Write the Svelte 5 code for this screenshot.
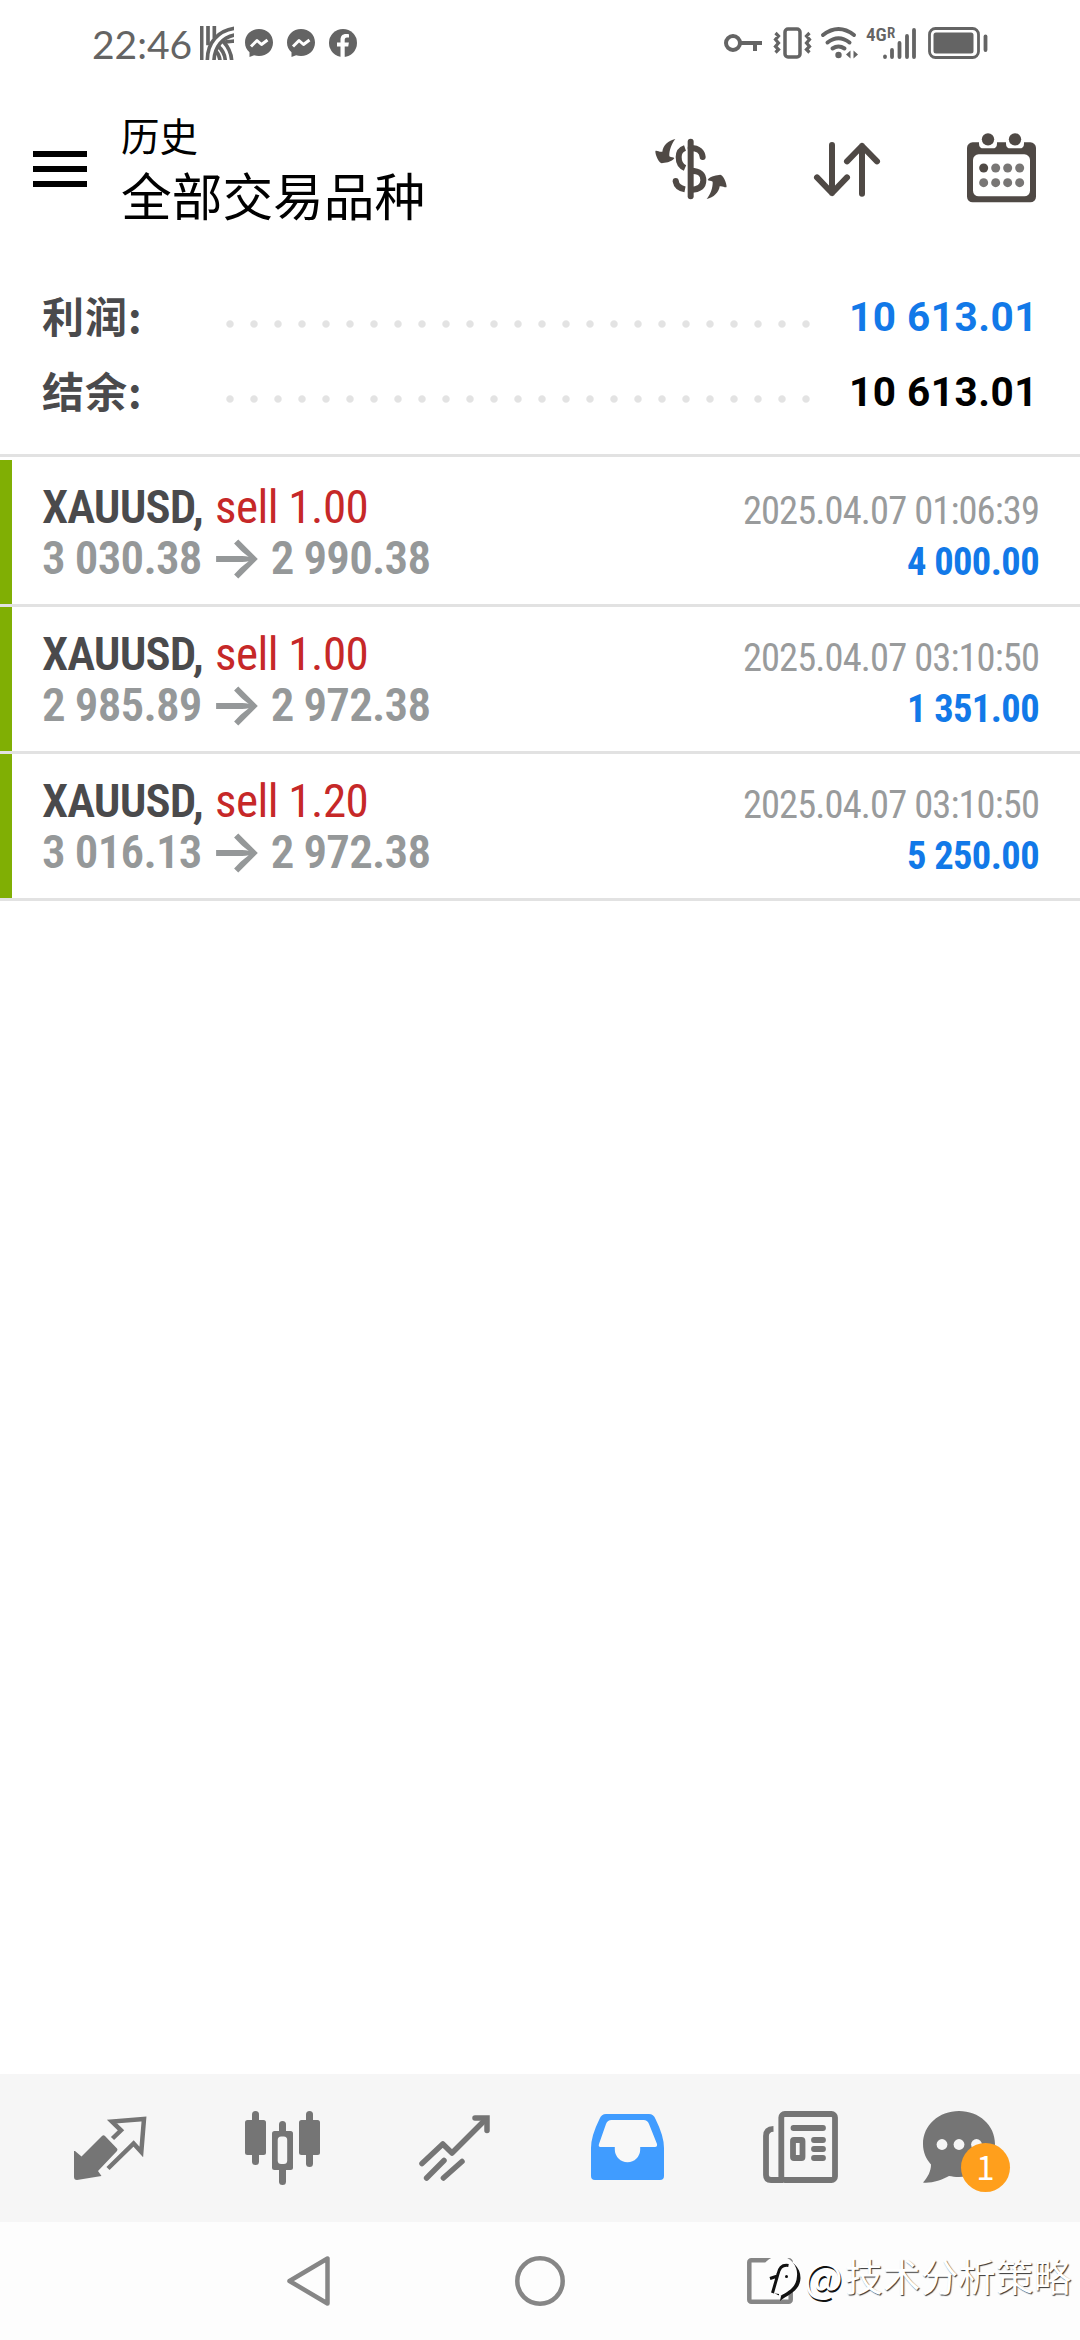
<script>
  const summary = [
    { label: '利润:', value: '10 613.01', tone: 'blue' },
    { label: '结余:', value: '10 613.01', tone: 'black' }
  ];

  const deals = [
    { symbol: 'XAUUSD,', side: 'sell 1.00', from: '3 030.38', to: '2 990.38', time: '2025.04.07 01:06:39', profit: '4 000.00' },
    { symbol: 'XAUUSD,', side: 'sell 1.00', from: '2 985.89', to: '2 972.38', time: '2025.04.07 03:10:50', profit: '1 351.00' },
    { symbol: 'XAUUSD,', side: 'sell 1.20', from: '3 016.13', to: '2 972.38', time: '2025.04.07 03:10:50', profit: '5 250.00' }
  ];

  const calendarDots = [50, 86, 122, 158];
  let unread = $state(1);
</script>

{#snippet messenger()}
  <svg class="app-icon" viewBox="0 0 28 28">
    <path d="M14 0C6 0 0 6 0 13.4c0 4 1.700 7.400 4.500 9.900V28l4.600-1.700c1.500.5 3.200.7 4.900.7 8 0 14-6 14-13.600S22 0 14 0z" fill="#646464" />
    <path d="M6 17.500l6-6 4.500 4 6-4.500" fill="none" stroke="#fff" stroke-width="3" stroke-linejoin="round" />
  </svg>
{/snippet}

<div class="screen">
  <div class="status">
    <span class="clock">22:46</span>
    <svg class="weave" viewBox="0 0 102 102" fill="none" stroke="#646464" stroke-width="11">
      <path d="M5 0V102M24 0V58M43 0V36" />
      <path d="M22 102C22 50 54 14 104 7M42 102C44 64 66 34 104 27" />
      <path d="M54 60C68 72 75 86 76 104M69 46C84 62 94 82 95 104M48 76C56 84 59 92 60 104M76 46C86 48 94 46 104 45" />
    </svg>
    {@render messenger()}
    {@render messenger()}
    <svg class="app-icon" viewBox="0 0 28 28">
      <circle cx="14" cy="14" r="14" fill="#646464" />
      <path d="M11.500 28V17.500H8v-4h3.500V11c0-4 2-6 5.500-6 1.400 0 2.500.2 3 .3v3.300h-2c-1.700 0-2.300 1-2.300 2.300v2.600h4.200l-.7 4h-3.500V28z" fill="#fff" />
    </svg>

    <div class="status-right">
      <svg width="38" height="18" viewBox="0 0 38 18" fill="none" stroke="#646464" stroke-width="4">
        <circle cx="9" cy="9" r="7" />
        <path d="M16 9H38M31 9V17" />
      </svg>
      <svg class="vibrate" width="37" height="32" viewBox="0 0 37 32" fill="none" stroke="#646464" stroke-width="3.500">
        <rect x="11" y="2" width="15" height="28" rx="3" />
        <path d="M1.500 6l3 3-3 3.500 3 3.500-3 3.500 3 3-3 3M35.500 6l-3 3 3 3.500-3 3.500 3 3.500-3 3 3 3" stroke-width="3.200" />
      </svg>
      <svg class="wifi" width="37" height="32" viewBox="0 0 37 32" fill="none" stroke="#646464" stroke-width="4" stroke-linecap="round">
        <path d="M2 8Q17.500-4 33 8M6.500 15.500Q17.500 7 28.500 15.500M11.500 21.500Q17.500 17.500 23.500 21.500" />
        <circle cx="17.500" cy="28" r="3.200" fill="#646464" stroke="none" />
        <path d="M29.500 23.500v8L25 27.500zM32.500 23.500v8l4.500-4z" fill="#646464" stroke="none" />
      </svg>
      <span class="net">4G</span>
      <span class="roam">R</span>
      <svg class="bars" width="33" height="31" viewBox="0 0 33 31" stroke="#646464" stroke-width="3.800" stroke-linecap="round">
        <path d="M2 28.500v.5M9 22v7M16.500 15v14M24 8v21M31 2v27" />
      </svg>
      <svg width="60" height="32" viewBox="0 0 60 32">
        <rect x="1.500" y="1.500" width="49" height="29" rx="6" fill="none" stroke="#646464" stroke-width="2.800" />
        <rect x="5.500" y="5.500" width="40" height="21" rx="2.500" fill="#646464" />
        <path d="M57.500 9.500V23" stroke="#646464" stroke-width="3.800" stroke-linecap="round" />
      </svg>
    </div>
  </div>

  <header>
    <button class="menu" aria-label="菜单"><i></i><i></i><i></i></button>
    <div class="titles">
      <div class="title">历史</div>
      <div class="subtitle">全部交易品种</div>
    </div>
    <div class="actions">
      <svg width="72" height="60" viewBox="0 0 216 180" fill="none" stroke="#4f4945" stroke-width="18">
        <path d="M61 0C40 4 24 20 22 38C14 40 8 34 2 35C-2 36 8 70 20 73C30 70 48 72 58 58C56 54 48 56 43 52C42 34 50 14 61 0z" fill="#4f4945" stroke="none" />
        <path d="M155 180C176 176 192 160 194 142C202 140 208 146 214 145C218 144 208 110 196 107C186 110 168 108 158 122C160 126 168 124 173 128C174 146 166 166 155 180z" fill="#4f4945" stroke="none" />
        <path d="M90 27C75 32 71 42 71 54C71 70 78 82 90 87M90 151C74 148 64 140 62 126" />
        <circle cx="62" cy="126" r="9" fill="#4f4945" stroke="none" />
        <path d="M107 27C132 27 142 40 143 54" stroke-linecap="round" />
        <path d="M107 95C134 96 145 104 145 124C145 142 132 152 107 153" />
        <path d="M107 8V172" stroke-linecap="round" />
      </svg>
      <svg width="66" height="55" viewBox="0 0 198 165" fill="none" stroke="#4f4945" stroke-width="18" stroke-linecap="round" stroke-linejoin="round">
        <path d="M54 9V153M9 106L54 153L99 106M144 155V12M99 58L144 12L189 58" />
      </svg>
      <svg class="calendar" width="69" height="70" viewBox="0 0 207 210">
        <rect y="28" width="207" height="180" rx="17" fill="#4f4945" />
        <rect x="18" y="64" width="171" height="126" rx="17" fill="#fff" />
        <path d="M36 26H90V32Q90 46 76 46H50Q36 46 36 32zM117 26H171V32Q171 46 157 46H131Q117 46 117 32z" fill="#fff" />
        <circle cx="63" cy="19" r="18.500" fill="#4f4945" />
        <circle cx="144" cy="19" r="18.500" fill="#4f4945" />
        {#each calendarDots as x, i}
          <circle cx={x} cy="105" r="13.500" fill={i === 0 ? '#4f4945' : '#787675'} />
          <circle cx={x} cy="149" r="13.500" fill="#787675" />
        {/each}
      </svg>
    </div>
  </header>

  <section class="summary">
    {#each summary as row}
      <div class="sum-row">
        <span class="sum-label">{row.label}</span>
        <span class="leader"></span>
        <span class="sum-value {row.tone}">{row.value}</span>
      </div>
    {/each}
  </section>

  <main>
    {#each deals as deal}
      <div class="deal">
        <div class="left">
          <div class="line"><b>{deal.symbol}</b><span class="sell">{deal.side}</span></div>
          <div class="line prices"><span>{deal.from}</span><span class="arrow">→</span><span>{deal.to}</span></div>
        </div>
        <div class="right">
          <div class="time">{deal.time}</div>
          <div class="profit">{deal.profit}</div>
        </div>
      </div>
    {/each}
  </main>

  <nav class="tabs">
    <svg width="72" height="64" viewBox="0 0 72 64">
      <path d="M1 35L7.500 40.500L28 20Q29.500 18.500 31 20L43 32.500Q44 33.500 43 35L24 55L27.500 60L3 64Q0 64 0 61V35z" fill="#757575" />
      <path d="M38.500 22.500L47 14.300L38 5.500L70 3L67.300 36L59.600 27.500L34 52.500" fill="none" stroke="#757575" stroke-width="4.500" />
    </svg>
    <svg width="75" height="74" viewBox="0 0 75 74" fill="#757575">
      <rect x="7" width="7" height="54" rx="3.500" />
      <rect y="9" width="21" height="35" rx="2.500" />
      <rect x="61" width="7" height="56" rx="3.500" />
      <rect x="54" y="9" width="21" height="35" rx="2.500" />
      <rect x="34" y="10" width="7" height="64" rx="3.500" />
      <rect x="27" y="20" width="21" height="39" rx="2.500" />
      <rect x="32.700" y="25.500" width="9.500" height="27.500" rx="3.500" fill="#f6f6f6" />
    </svg>
    <svg width="71" height="66" viewBox="0 0 71 66" fill="none" stroke="#757575" stroke-width="5.500" stroke-linecap="round">
      <path d="M3 48.500L23.800 29L33 38L67 4M7.600 63L25 45.500M24.400 63L43 46.500" stroke-linejoin="round" />
      <path d="M56 3H68V15.500" />
    </svg>
    <svg class="inbox" width="73" height="66" viewBox="0 0 73 66">
      <path d="M15 0H58Q62.500 0 64.500 5Q73 22 73 34V62Q73 66 69 66H4Q0 66 0 62V34Q0 22 8.500 5Q10.500 0 15 0z" fill="#409cff" />
      <path d="M20.500 6H52.500Q56.500 6 58 10L66 30Q66.500 33 64 33H49.200V35.500A12.700 12.700 0 0 1 23.800 35.500V33H9.500Q7 33 8 30L15 10Q16.500 6 20.500 6z" fill="#f8f8f8" />
    </svg>
    <svg width="75" height="72" viewBox="0 0 75 72" fill="none" stroke="#757575" stroke-width="5.800">
      <rect x="18.300" y="3" width="53.700" height="66" rx="3.500" />
      <path d="M10.500 17.800Q3 18 3 25V64Q3 69 8 69H20" />
      <path d="M30.500 17H60M51 29H60M51 38H60M51 47H60" stroke-linecap="round" />
      <rect x="30" y="29" width="9.500" height="18" rx="1" />
    </svg>
    <div class="chat">
      <svg width="72" height="72" viewBox="0 0 72 72">
        <path d="M36 0C56 0 72 14 72 33S56 66 36 66C32 66 29 65.500 26 65C19 69 8 72.500 0 71.500C5 66 8 60 8 53.500C3 48 0 41 0 33C0 14 16 0 36 0z" fill="#757575" />
        <circle cx="19" cy="33.500" r="5.400" fill="#f6f6f6" />
        <circle cx="36" cy="33.500" r="5.400" fill="#f6f6f6" />
        <circle cx="53.500" cy="33.500" r="5.400" fill="#f6f6f6" />
      </svg>
      <span class="badge">{unread}</span>
    </div>
  </nav>

  <div class="system">
    <svg width="43" height="50" viewBox="0 0 43 50" fill="none" stroke="#868686" stroke-width="4.500" stroke-linejoin="round">
      <path d="M2.500 25L40.500 2.500V47.500z" />
    </svg>
    <svg width="50" height="50" viewBox="0 0 50 50" fill="none" stroke="#868686" stroke-width="4.500">
      <circle cx="25" cy="25" r="22.700" />
    </svg>
    <svg width="46" height="46" viewBox="0 0 46 46" fill="none" stroke="#868686" stroke-width="4.500">
      <rect x="2.300" y="2.300" width="41.400" height="41.400" rx="2" />
    </svg>
    <div class="watermark">
      <svg width="40" height="46" viewBox="0 0 40 46">
        <path d="M20 3A19 19 0 0 1 39.500 22C39 35 28 38 19 45L20 40A19 19 0 0 1 20 3z" fill="#111" />
        <path d="M18 0A18 18 0 0 1 36 20C35.500 33 25 36 18 41L18 38A18 19 0 0 1 18 0z" fill="#fdfdfd" />
        <path d="M27.500 9.500Q19 8 17 18L11.500 37M9 22.500L16.500 20" fill="none" stroke="#111" stroke-width="3" />
        <circle cx="25.500" cy="20.500" r="1.500" fill="#111" />
      </svg>
      <span class="at">@</span><span>技术分析策略</span>
    </div>
  </div>
</div>

<style>
  :global(body) {
    background: #fff;
  }

  .screen {
    width: 1080px;
    height: 2340px;
    display: flex;
    flex-direction: column;
    background: #fff;
    font-family: Roboto, 'Noto Sans CJK SC', sans-serif;
    overflow: hidden;
  }
  svg { display: block; flex-shrink: 0; overflow: visible; }

  .status {
    height: 86px;
    display: flex;
    align-items: center;
    padding: 0 92px 0 92px;
    color: #646464;
  }
  .clock { font: 39px/46px Lato, sans-serif; width: 108px; margin-top: 2px; }
  .weave { width: 34px; height: 34px; margin-right: 11px; overflow: hidden; }
  .app-icon { width: 28px; height: 28px; margin-right: 14px; }
  .status-right {
    margin-left: auto;
    display: flex;
    align-items: center;
  }
  .vibrate { margin-left: 12px; }
  .wifi { margin-left: 10px; }
  .net, .roam { font: 600 19px/20px 'Roboto Condensed', sans-serif; margin-top: -16px; }
  .net { margin-left: 8px; width: 21px; }
  .roam { font-size: 15px; width: 8px; margin-top: -20px; }
  .bars { margin-left: -12px; margin-right: 12px; }

  header {
    height: 168px;
    display: flex;
    align-items: flex-start;
    padding: 0 44px 0 33px;
  }
  .menu {
    display: flex;
    flex-direction: column;
    gap: 9px;
    width: 54px;
    margin-top: 65px;
    padding: 0;
    border: 0;
    background: none;
  }
  .menu i { height: 6px; background: #000; }
  .titles { margin: 18px 0 0 34px; color: #000; font-family: 'Noto Sans CJK SC', sans-serif; }
  .title { font-size: 38.500px; line-height: 60px; }
  .subtitle { font-size: 50.700px; line-height: 60px; }
  .actions {
    margin-left: auto;
    margin-top: 53px;
    display: flex;
    gap: 87px;
  }
  .actions svg:nth-child(2) { margin-top: 3px; }
  .calendar { margin-top: -6px; }

  .summary {
    height: 203px;
    box-sizing: border-box;
    padding: 25px 42px 0 42px;
    border-bottom: 3px solid #e2e2e2;
  }
  .sum-row { display: flex; align-items: center; height: 75px; }
  .sum-label {
    width: 176px;
    margin-top: -4px;
    color: #4a4a4c;
    font: 700 42px/60px 'Noto Sans CJK SC', sans-serif;
    letter-spacing: 1px;
  }
  .leader {
    width: 600px;
    height: 24px;
    margin-top: 14px;
    background: radial-gradient(circle at 12px 12px, #e3e3e3 3.200px, transparent 4.200px) 0 0 / 24px 24px repeat-x;
  }
  .sum-value {
    margin-left: auto;
    margin-top: 1px;
    font-size: 40.500px;
    line-height: 60px;
    font-weight: 700;
    letter-spacing: 0.5px;
  }
  .blue { color: #1279e8; }
  .black { color: #000; }

  main { flex: 1; padding-top: 3px; }
  .deal {
    height: 147px;
    box-sizing: border-box;
    display: flex;
    justify-content: space-between;
    padding: 21px 41px 0 42px;
    border-bottom: 3px solid #e2e2e2;
    background: linear-gradient(#80af04, #80af04) 0 0 / 12px 144px no-repeat;
    font-family: 'Roboto Condensed', Roboto, sans-serif;
  }
  .line { display: flex; font-size: 47px; line-height: 51px; letter-spacing: -0.9px; white-space: nowrap; }
  .line b { width: 173px; color: #4a4a4c; font-weight: 600; }
  .sell { color: #c62828; letter-spacing: -0.5px; }
  .prices { letter-spacing: -0.8px; color: #959899; font-weight: 600; }
  .arrow {
    width: 69px;
    display: flex;
    justify-content: center;
    font: 600 57px/49px Inter, sans-serif;
    letter-spacing: 0;
  }
  .right { text-align: right; padding-top: 4px; }
  .time { font-size: 38.500px; line-height: 51px; letter-spacing: -0.9px; color: #999b9c; }
  .profit { font-size: 38.500px; line-height: 51px; letter-spacing: -0.6px; font-weight: 700; color: #1279e8; }

  .tabs {
    height: 148px;
    display: flex;
    align-items: center;
    gap: 99px;
    padding-left: 74px;
    background: #f6f6f6;
  }
  .inbox { margin: -2px 0 0 2px; }
  .inbox + svg { margin-top: -2px; }
  .chat { position: relative; margin: -2px 0 0 -14px; }
  .badge {
    position: absolute;
    left: 38px;
    top: 32px;
    width: 49px;
    height: 49px;
    border-radius: 50%;
    background: #ff9f1c;
    color: #fff;
    font: 33px/47px 'Noto Sans CJK SC', sans-serif;
    text-align: center;
  }

  .system {
    position: relative;
    height: 118px;
    display: flex;
    align-items: center;
    padding-left: 287px;
    background: #fdfdfd;
  }
  .system > svg:nth-of-type(2) { margin-left: 185px; }
  .system > svg:nth-of-type(3) { margin-left: 182px; }
  .watermark {
    position: absolute;
    left: 761px;
    top: 34px;
    display: flex;
    color: #fff;
    font: 37.700px/38px 'Noto Sans CJK SC', sans-serif;
    text-shadow: 1px 1px 1px #333;
    white-space: nowrap;
  }
  .at { font-size: 41px; width: 41px; margin-left: 3px; text-shadow: 1px 2px 0 #111; }
</style>
